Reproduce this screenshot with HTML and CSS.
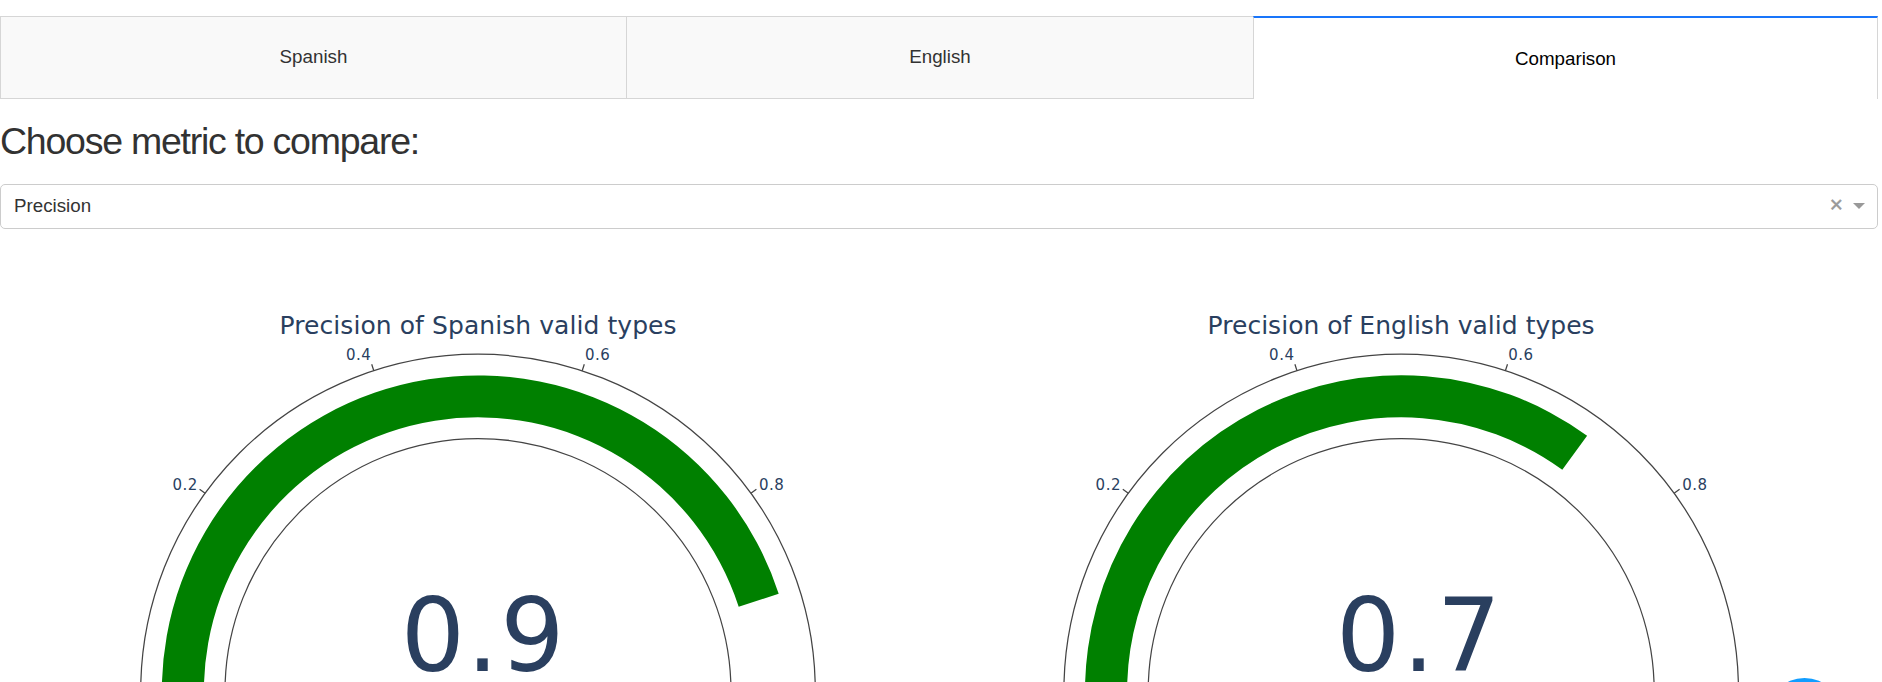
FILE: index.html
```html
<!DOCTYPE html>
<html lang="en">
<head>
<meta charset="utf-8">
<title>Metric comparison</title>
<link rel="stylesheet" href="styles.css">
</head>
<body>
<main class="page">
  <nav class="tabs">
    <div class="tab">Spanish</div>
    <div class="tab">English</div>
    <div class="tab tab-selected">Comparison</div>
  </nav>
  <h3 class="heading">Choose metric to compare:</h3>
  <div class="select">
    <span class="select-value">Precision</span>
    <span class="select-clear">×</span>
    <span class="select-arrow"></span>
  </div>
  <section class="gauges">
    <svg class="gauge" width="939" height="453" viewBox="0 229 939 453">
      <text class="title" x="279.6" y="333.6" textLength="397">Precision of Spanish valid types</text>
      <g transform="translate(478 691.5)">
        <circle class="ring" r="337.3"/>
        <circle class="ring" r="253"/>
        <path class="bar" d="M-316.2 0A316.2 316.2 0 0 1 300.7 -97.7L260.7 -84.7A274.1 274.1 0 0 0 -274.1 0Z"/>
        <path class="ring" d="M-272.9 -198.3l-5.5 -4M-104.2 -320.8l-2.1 -6.4M104.2 -320.8l2.1 -6.4M272.9 -198.3l5.5 -4"/>
        <text class="tick" x="-305.6" y="-201.5">0.2</text>
        <text class="tick" x="-132.1" y="-331.5">0.4</text>
        <text class="tick" x="107" y="-331.5">0.6</text>
        <text class="tick" x="281" y="-201.5">0.8</text>
      </g>
      <text class="number" x="400.7" y="671.3">0.9</text>
    </svg>
    <svg class="gauge" width="939" height="453" viewBox="0 229 939 453">
      <text class="title" x="268.6" y="333.6" textLength="387">Precision of English valid types</text>
      <g transform="translate(462.2 691.5)">
        <circle class="ring" r="337.3"/>
        <circle class="ring" r="253"/>
        <path class="bar" d="M-316.2 0A316.2 316.2 0 0 1 185.9 -255.8L161.1 -221.8A274.1 274.1 0 0 0 -274.1 0Z"/>
        <path class="ring" d="M-272.9 -198.3l-5.5 -4M-104.2 -320.8l-2.1 -6.4M104.2 -320.8l2.1 -6.4M272.9 -198.3l5.5 -4"/>
        <text class="tick" x="-305.6" y="-201.5">0.2</text>
        <text class="tick" x="-132.1" y="-331.5">0.4</text>
        <text class="tick" x="107" y="-331.5">0.6</text>
        <text class="tick" x="281" y="-201.5">0.8</text>
      </g>
      <text class="number number-wide" x="396.9" y="671.3">0.7</text>
    </svg>
  </section>
</main>
<div class="debug-button"></div>
</body>
</html>
```
FILE: styles.css
```css
* { box-sizing: border-box; }

body {
  margin: 0;
  height: 682px;
  overflow: hidden;
  background: #fff;
  color: #323232;
  font: 18.75px/30px "Liberation Sans", Arial, sans-serif;
}

.page {
  width: 1878px;
  padding-top: 16px;
}

.tabs {
  display: grid;
  grid-template-columns: 626px 627px 625px;
  height: 83px;
}

.tab {
  padding-top: 25px;
  border: 1px solid #d6d6d6;
  border-right: none;
  background: #f9f9f9;
  text-align: center;
}

.tab-selected {
  padding-top: 26px;
  border-top: 2px solid #1975fa;
  border-right: 1px solid #d6d6d6;
  border-bottom: none;
  background: #fff;
  color: #000;
}

.heading {
  margin: 18px 0 19px;
  font-size: 37.5px;
  font-weight: 400;
  line-height: 48px;
  letter-spacing: -1.25px;
}

.select {
  display: flex;
  align-items: center;
  height: 45px;
  padding: 0 12px 2px 13px;
  border: 1px solid #ccc;
  border-radius: 5px;
}

.select-value {
  flex: 1;
  color: #333;
}

.select-clear {
  margin: 0 10px 2px 0;
  color: #999;
  font-size: 22.5px;
  -webkit-text-stroke: 0.5px #999;
}

.select-arrow {
  border: 6px solid transparent;
  border-top-color: #999;
  border-bottom: none;
}

.gauges { display: flex; }

.gauge {
  display: block;
  font-family: "DejaVu Sans", Verdana, sans-serif;
}

.title { font-size: 25px; fill: #2a3f5f; }
.tick { font-size: 15px; letter-spacing: 0.5px; fill: #2a3f5f; }
.number { font-size: 101px; letter-spacing: 1.6px; fill: #2a3f5f; }
.number-wide { letter-spacing: 2.3px; }
.ring { fill: none; stroke: #444; stroke-width: 1.25; }
.bar { fill: #008000; }

.debug-button {
  position: fixed;
  left: 1767px;
  top: 678px;
  width: 75px;
  height: 75px;
  border-radius: 50%;
  background: #119dff;
}
```
